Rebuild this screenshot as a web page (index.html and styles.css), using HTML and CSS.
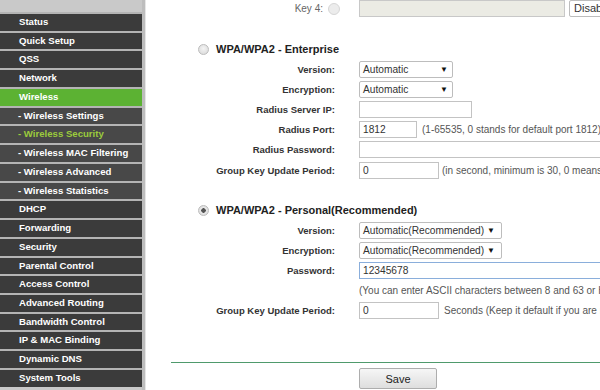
FILE: index.html
```html
<!DOCTYPE html>
<html>
<head>
<meta charset="utf-8">
<link rel="stylesheet" href="styles.css">
</head>
<body>
<div class="page">
  <nav class="sidebar">
    <ul class="menu">
      <li class="item">Status</li>
      <li class="item">Quick Setup</li>
      <li class="item">QSS</li>
      <li class="item">Network</li>
      <li class="item active">Wireless</li>
      <li class="item sub">- Wireless Settings</li>
      <li class="item sub current">- Wireless Security</li>
      <li class="item sub">- Wireless MAC Filtering</li>
      <li class="item sub">- Wireless Advanced</li>
      <li class="item sub">- Wireless Statistics</li>
      <li class="item">DHCP</li>
      <li class="item">Forwarding</li>
      <li class="item">Security</li>
      <li class="item">Parental Control</li>
      <li class="item">Access Control</li>
      <li class="item">Advanced Routing</li>
      <li class="item">Bandwidth Control</li>
      <li class="item">IP &amp; MAC Binding</li>
      <li class="item">Dynamic DNS</li>
      <li class="item">System Tools</li>
    </ul>
  </nav>
  <main class="content">
    <div class="key-row">
      <div class="key-label">Key 4: <span class="radio disabled"></span></div>
      <div class="field">
        <span class="input key-input"></span>
        <span class="select disab-select"><span class="sel-text">Disabled</span></span>
      </div>
    </div>

    <section class="mode enterprise">
      <div class="mode-head"><span class="radio"></span><span class="mode-title">WPA/WPA2 - Enterprise</span></div>
      <div class="form">
        <div class="label">Version:</div>
        <div class="field"><span class="select sel-short"><span class="sel-text">Automatic</span><span class="arrow">▼</span></span></div>
        <div class="label">Encryption:</div>
        <div class="field"><span class="select sel-short"><span class="sel-text">Automatic</span><span class="arrow">▼</span></span></div>
        <div class="label">Radius Server IP:</div>
        <div class="field"><span class="input w-ip"></span></div>
        <div class="label">Radius Port:</div>
        <div class="field"><span class="input w-port">1812</span><span class="hint">(1-65535, 0 stands for default port 1812)</span></div>
        <div class="label">Radius Password:</div>
        <div class="field"><span class="input w-wide"></span></div>
        <div class="label">Group Key Update Period:</div>
        <div class="field"><span class="input w-period">0</span><span class="hint tight">(in second, minimum is 30, 0 means no update)</span></div>
      </div>
    </section>

    <section class="mode personal">
      <div class="mode-head"><span class="radio checked"></span><span class="mode-title">WPA/WPA2 - Personal(Recommended)</span></div>
      <div class="form">
        <div class="label">Version:</div>
        <div class="field"><span class="select sel-long"><span class="sel-text">Automatic(Recommended)</span><span class="arrow">▼</span></span></div>
        <div class="label">Encryption:</div>
        <div class="field"><span class="select sel-long"><span class="sel-text">Automatic(Recommended)</span><span class="arrow">▼</span></span></div>
        <div class="label">Password:</div>
        <div class="field"><span class="input w-wide focus">12345678</span></div>
        <div class="label"></div>
        <div class="field"><span class="note">(You can enter ASCII characters between 8 and 63 or Hexadecimal characters between 8 and 64.)</span></div>
        <div class="label">Group Key Update Period:</div>
        <div class="field"><span class="input w-period">0</span><span class="hint">Seconds (Keep it default if you are not sure, minimum is 30, 0 means no update)</span></div>
      </div>
    </section>

    <div class="divider"></div>
    <div class="actions"><button class="btn">Save</button></div>
  </main>
</div>
</body>
</html>
```

FILE: styles.css
```css
* { box-sizing: border-box; }
html, body { margin: 0; padding: 0; }
body {
  width: 600px;
  height: 390px;
  overflow: hidden;
  background: #ffffff;
  font-family: "Liberation Sans", Arial, sans-serif;
  color: #333;
}
.page {
  display: flex;
  height: 390px;
}
.sidebar {
  flex: 0 0 146px;
  background: #c9c9c9;
  border-right: 1px solid #e6e6e6;
  padding-top: 12px;
  padding-right: 3px;
  box-shadow: inset -3px 0 0 #bdbdbd;
}
.menu {
  list-style: none;
  margin: 0;
  padding: 0;
}
.item {
  height: 18.74px;
  border-top: 2px solid #b4b4b4;
  background: #3b3b3b;
  color: #ffffff;
  font-weight: bold;
  font-size: 9.6px;
  line-height: 16.4px;
  padding-left: 19px;
  white-space: nowrap;
}
.item.sub { background: #484848; padding-left: 18px; }
.item.active { background: #5cb233; }
.item.current { color: #9ccc3c; }

.content {
  flex: 1;
  min-width: 0;
  overflow: hidden;
  font-size: 10px;
}

.key-row {
  display: grid;
  grid-template-columns: 194px 1fr;
  column-gap: 19px;
  height: 17px;
  align-items: center;
}
.key-label {
  display: flex;
  justify-content: flex-end;
  align-items: center;
  gap: 5px;
  color: #666;
  font-size: 10px;
}
.field {
  display: flex;
  align-items: center;
  white-space: nowrap;
}
.input, .select {
  display: inline-flex;
  align-items: center;
  flex: none;
  height: 17px;
  border: 1px solid #c3c3c3;
  background: #fff;
  padding-left: 3px;
  font-size: 10.2px;
  color: #333;
}
.key-input {
  width: 206px;
  background: #ebebe4;
  border-color: #c8c8c8;
  margin-top: -1px;
}
.disab-select {
  margin-left: 4px;
  width: 80px;
  border-radius: 2px;
  font-size: 11px;
  padding-left: 4px;
  margin-top: -1px;
}
.select {
  border-radius: 2px;
  justify-content: space-between;
  padding-right: 4px;
  border-color: #bdbdbd;
}
.arrow { font-size: 8px; color: #111; }
.sel-short { width: 94px; }
.sel-long { width: 143px; padding-right: 6px; }
.w-ip { width: 113px; }
.w-port { width: 58px; }
.w-wide { width: 260px; }
.w-period { width: 80px; }
.focus { border-color: #8aaedb; }

.hint { margin-left: 5px; color: #555; font-size: 10px; }
.hint.tight { margin-left: 3px; }
.note { color: #555; font-size: 10px; }

.mode-head {
  display: flex;
  align-items: center;
  height: 20px;
  padding-left: 52px;
}
.enterprise { margin-top: 22px; }
.personal { margin-top: 20px; }
.mode-title {
  margin-left: 7px;
  font-weight: bold;
  font-size: 11px;
  color: #222;
}
.radio {
  display: inline-block;
  width: 11px;
  height: 11px;
  border-radius: 50%;
  border: 1px solid #bcbcbc;
  background: radial-gradient(circle at 50% 40%, #f4f4f4, #d6d6d6);
  flex: none;
}
.radio.disabled {
  width: 12px;
  height: 12px;
  border-color: #d6d6d6;
  background: #ececec;
}
.radio.checked {
  background: radial-gradient(circle, #555 0 2px, #eaeaea 2.5px, #d4d4d4 100%);
}

.form {
  display: grid;
  grid-template-columns: 189px 1fr;
  column-gap: 24px;
  grid-auto-rows: 20.2px;
  align-items: center;
}
.label {
  text-align: right;
  font-weight: bold;
  font-size: 9.5px;
  color: #333;
  white-space: nowrap;
}

.divider {
  margin-top: 41px;
  margin-left: 25px;
  height: 1px;
  background: #4f9a6c;
}
.actions {
  padding-left: 213px;
  margin-top: 5px;
}
.btn {
  width: 78px;
  height: 21px;
  border: 1px solid #adadad;
  border-radius: 2px;
  background: linear-gradient(#f6f6f6, #dedede);
  font-family: "Liberation Sans", Arial, sans-serif;
  font-size: 11px;
  color: #222;
  padding: 0;
}
```
